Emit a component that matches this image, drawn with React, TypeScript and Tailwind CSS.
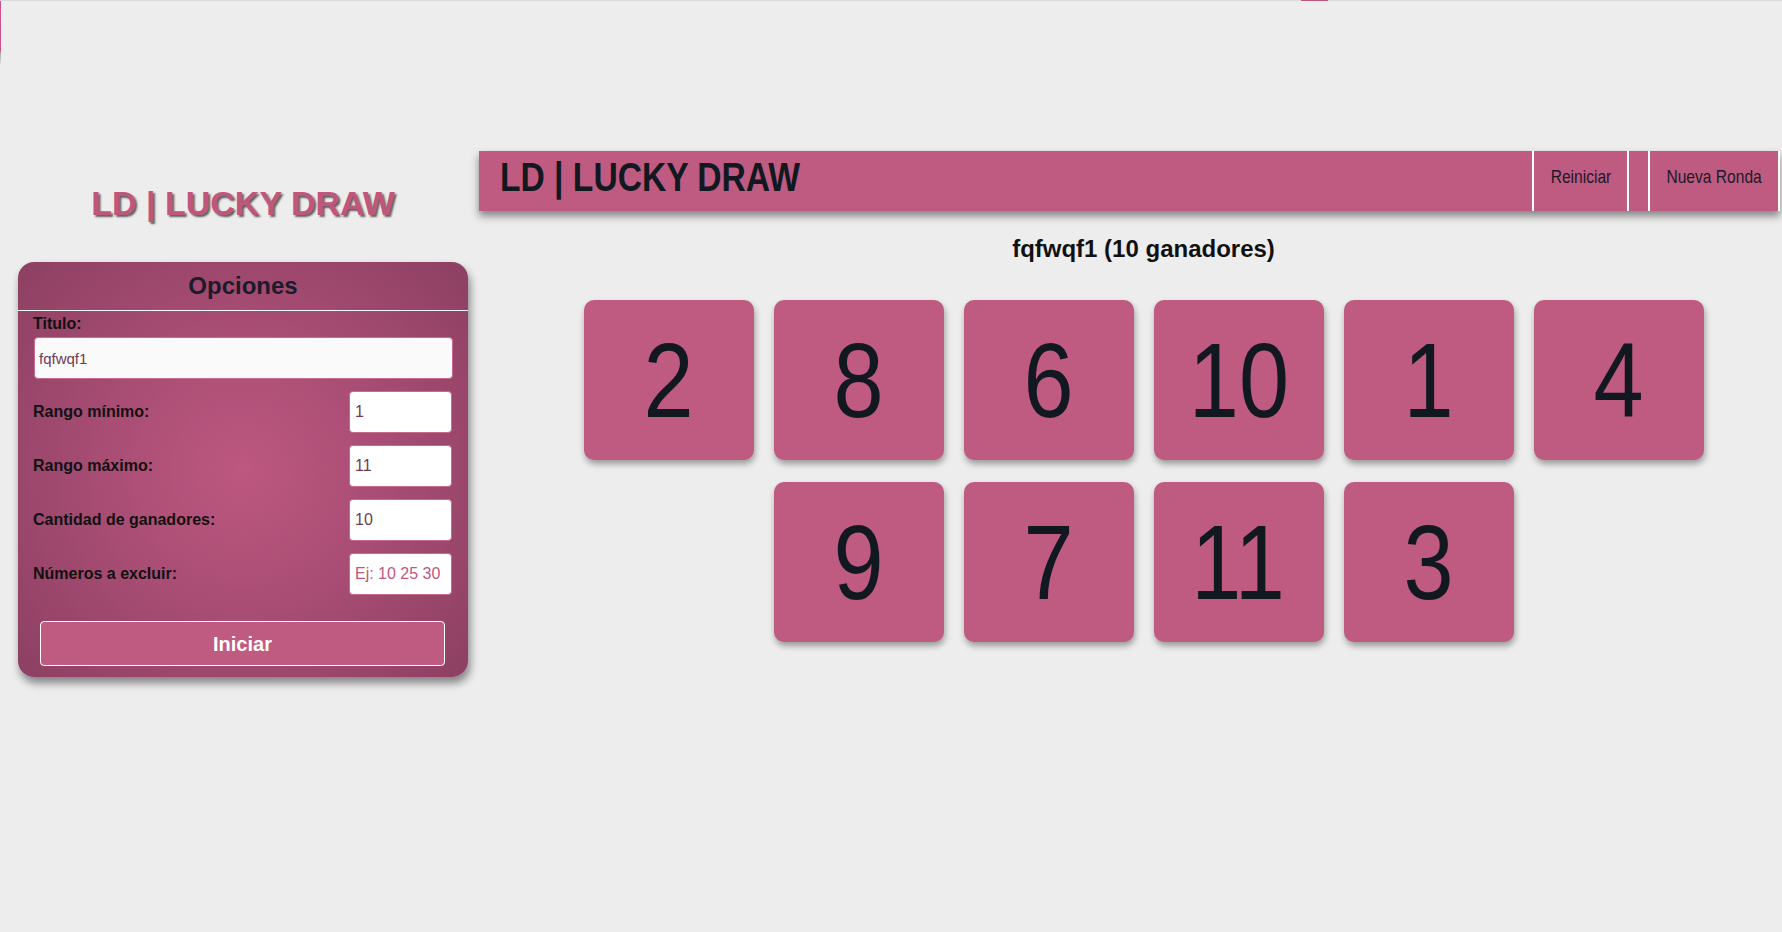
import React from 'react'

const winners = [2, 8, 6, 10, 1, 4, 9, 7, 11, 3]

const rows = [
    { label: 'Rango mínimo:', value: '1' },
    { label: 'Rango máximo:', value: '11' },
    { label: 'Cantidad de ganadores:', value: '10' },
    { label: 'Números a excluir:', value: '' },
]

const App = () => {
    return (
        <div className="relative min-h-screen bg-[#ededed] border-t border-[#d9d9d9] font-['Liberation_Sans',Arial,sans-serif]">

            {/* loading marks at the top edge */}
            <div className="absolute left-[1301px] top-[-1px] w-[27px] h-[1px] bg-[#c0567e]" />
            <div className="absolute left-0 top-0 w-[1px] h-[50px] bg-[#d0508a]" />
            <div className="absolute left-0 top-[50px] w-[1px] h-[15px] bg-gradient-to-b from-[#999] to-[#ededed]" />

            <div className="flex pt-[150px]">

                <aside className="w-[479px] shrink-0 pt-[34px]">
                    <div className="ml-[18px] w-[450px]">
                        <h1 className="text-center text-[34px] leading-[37px] font-bold text-[#c0567e] [text-shadow:2px_2px_2px_rgba(0,0,0,0.6)]">
                            LD | LUCKY DRAW
                        </h1>

                        <div className="mt-[40px] rounded-[16px] bg-[radial-gradient(circle_at_50%_50%,#bd5880_0%,#a94d74_45%,#8c4062_100%)] shadow-[2px_6px_8px_rgba(0,0,0,0.45)] pb-[11px]">
                            <div className="py-[10px] border-b border-white">
                                <h2 className="text-center text-[24px] leading-[28px] font-bold text-[#1b1b2b]">Opciones</h2>
                            </div>

                            <div className="px-[15px] pt-[3px]">
                                <label className="block text-[16px] leading-[20px] font-bold text-[#111]">Titulo:</label>
                                <input
                                    readOnly
                                    value="fqfwqf1"
                                    className="mt-[3px] ml-[1px] w-[419px] h-[42px] rounded-[4px] border border-[#c86a90] bg-[#fafafa] px-[4px] text-[15px] text-[#6e3b55] outline-none"
                                />

                                <div className="mt-[12px] flex flex-col gap-[12px]">
                                    {rows.map((row) => (
                                        <div key={row.label} className="flex items-center justify-between pr-[1px]">
                                            <span className="text-[16px] font-bold text-[#111]">{row.label}</span>
                                            <input
                                                readOnly
                                                value={row.value}
                                                placeholder="Ej: 10 25 30"
                                                className="w-[103px] h-[42px] rounded-[4px] border border-[#c86a90] bg-white px-[5px] text-[16px] text-[#6e3b55] placeholder:text-[#c0567e] outline-none"
                                            />
                                        </div>
                                    ))}
                                </div>
                            </div>

                            <div className="pl-[22px] pr-[23px] mt-[26px]">
                                <button className="w-full h-[45px] rounded-[4px] border border-white bg-[#bf5a81] text-white text-[20px] font-bold">
                                    Iniciar
                                </button>
                            </div>
                        </div>
                    </div>
                </aside>

                <main className="flex-1 min-w-0">
                    <header className="mr-[2px] h-[60px] bg-[#bf5a81] shadow-[0_5px_8px_rgba(0,0,0,0.45)] flex items-stretch justify-between">
                        <h1 className="pl-[21px] pt-[6px]">
                            <span className="inline-block origin-left scale-x-[0.84] whitespace-nowrap text-[40px] leading-[40px] font-bold text-[#111820]">
                                LD | LUCKY DRAW
                            </span>
                        </h1>
                        <nav className="flex gap-[19px]">
                            <button className="w-[97px] border-x-2 border-white flex justify-center items-start pt-[15px]">
                                <span className="inline-block scale-x-[0.82] whitespace-nowrap text-[19px] leading-[22px] text-[#1a1a28]">Reiniciar</span>
                            </button>
                            <button className="w-[132px] border-x-2 border-white flex justify-center items-start pt-[15px]">
                                <span className="inline-block scale-x-[0.82] whitespace-nowrap text-[19px] leading-[22px] text-[#1a1a28]">Nueva Ronda</span>
                            </button>
                        </nav>
                    </header>

                    <section className="pl-[26px]">
                        <h2 className="mt-[24px] text-center text-[24px] leading-[28px] font-bold text-[#111]">
                            fqfwqf1 (10 ganadores)
                        </h2>

                        <div className="mt-[26px] flex flex-wrap justify-center">
                            {winners.map((n) => (
                                <div
                                    key={n}
                                    className="mx-[10px] my-[11px] w-[170px] h-[160px] rounded-[10px] bg-[#bf5a81] shadow-[1px_4px_6px_rgba(0,0,0,0.35)] flex items-center justify-center"
                                >
                                    <span className="inline-block scale-x-[0.85] text-[106px] leading-none text-[#111820]">{n}</span>
                                </div>
                            ))}
                        </div>
                    </section>
                </main>
            </div>
        </div>
    )
}

export default App
